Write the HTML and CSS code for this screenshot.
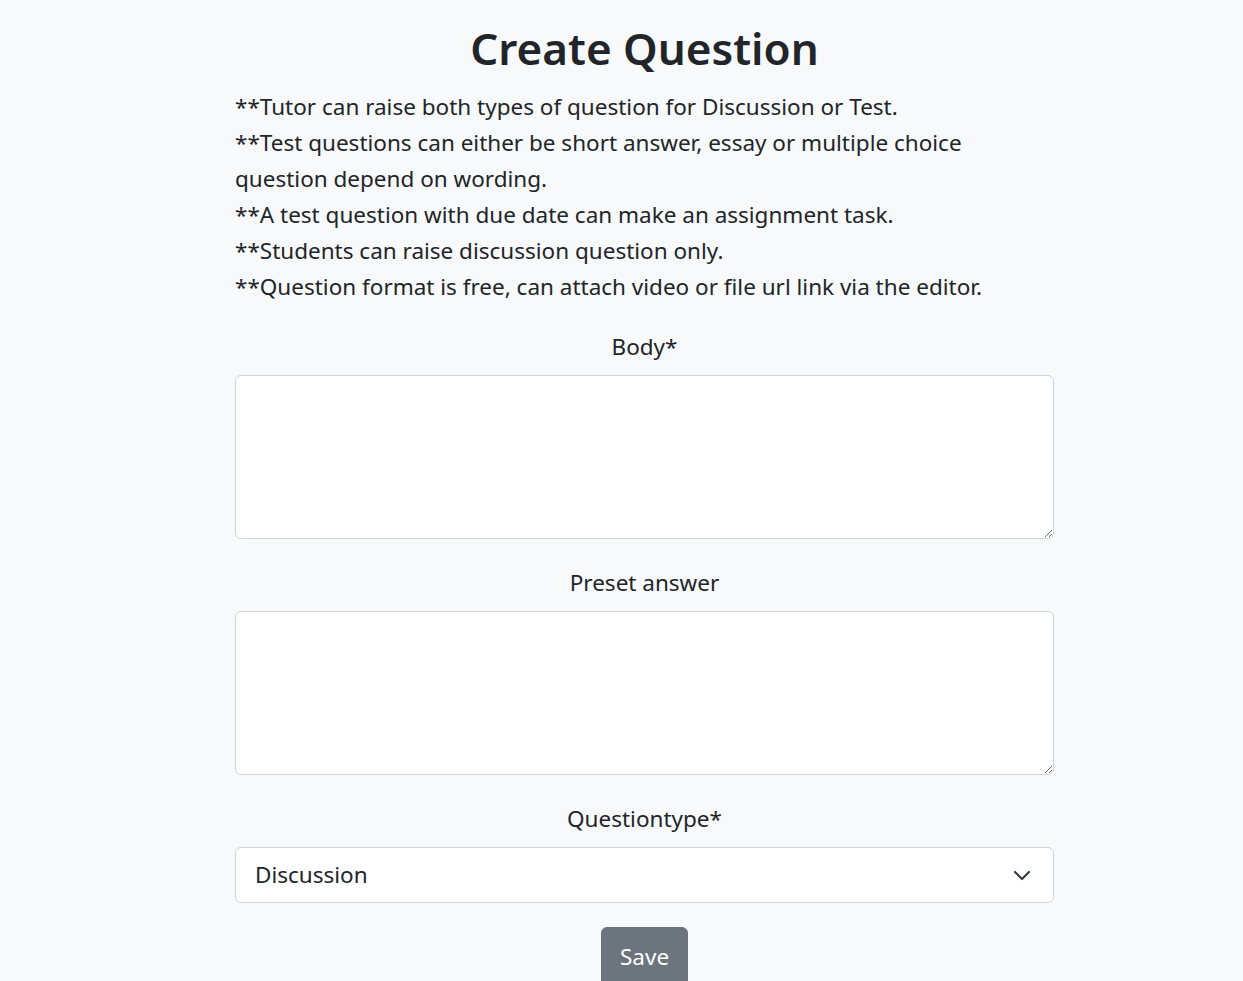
FILE: index.html
```html
<!DOCTYPE html>
<html lang="en">
<head>
<meta charset="utf-8">
<title>Create Question</title>
<link rel="stylesheet" href="styles.css">
</head>
<body>
<main class="page">
  <h1 class="title">Create Question</h1>
  <div class="notes">
    <div>**Tutor can raise both types of question for Discussion or Test.</div>
    <div>**Test questions can either be short answer, essay or multiple choice<br>question depend on wording.</div>
    <div>**A test question with due date can make an assignment task.</div>
    <div>**Students can raise discussion question only.</div>
    <div>**Question format is free, can attach video or file url link via the editor.</div>
  </div>
  <form class="form">
    <div class="field">
      <label class="label" for="body">Body*</label>
      <textarea id="body" class="control area"></textarea>
    </div>
    <div class="field">
      <label class="label" for="preset">Preset answer</label>
      <textarea id="preset" class="control area"></textarea>
    </div>
    <div class="field">
      <label class="label" for="qtype">Questiontype*</label>
      <div class="select-wrap">
        <select id="qtype" class="control select">
          <option>Discussion</option>
          <option>Test</option>
        </select>
        <svg class="chev" width="18" height="12" viewBox="0 0 18 12" aria-hidden="true"><path d="M2 3l7 7 7-7" fill="none" stroke="#343a40" stroke-width="2.2" stroke-linecap="round" stroke-linejoin="round"/></svg>
      </div>
    </div>
    <div class="actions">
      <button type="button" class="btn">Save</button>
    </div>
  </form>
</main>
</body>
</html>
```
FILE: styles.css
```css
html, body {
  margin: 0;
  padding: 0;
  background: #f8f9fa;
}
body {
  font-family: "Noto Sans", "Open Sans", sans-serif;
  color: #212529;
  font-size: 22.5px;
  line-height: 36px;
  overflow: hidden;
}
.page {
  width: 819px;
  margin-left: 235px;
}
.title {
  margin: 17px 0 0;
  font-size: 44px;
  font-weight: 600;
  line-height: 62px;
  text-align: center;
}
.notes {
  margin-top: 10px;
}
.form {
  margin-top: 24px;
}
.field {
  display: flex;
  flex-direction: column;
  margin-bottom: 26px;
}
.label {
  text-align: center;
  margin-bottom: 10px;
}
.control {
  box-sizing: border-box;
  width: 100%;
  border: 1px solid #ced4da;
  border-radius: 6px;
  background: #fff;
  font: inherit;
  color: #212529;
}
.area {
  height: 164px;
  resize: vertical;
  display: block;
}
.select-wrap {
  position: relative;
}
.select {
  height: 56px;
  padding: 0 48px 0 19px;
  appearance: none;
  -webkit-appearance: none;
  display: block;
}
.chev {
  position: absolute;
  right: 23px;
  top: 22px;
  pointer-events: none;
}
.actions {
  display: flex;
  justify-content: center;
  margin-top: -2px;
}
.btn {
  background: #6c757d;
  color: #fff;
  border: 1px solid #6c757d;
  border-radius: 6px;
  font: inherit;
  height: 60px;
  padding: 0 18px;
  width: 87px;
}
```
